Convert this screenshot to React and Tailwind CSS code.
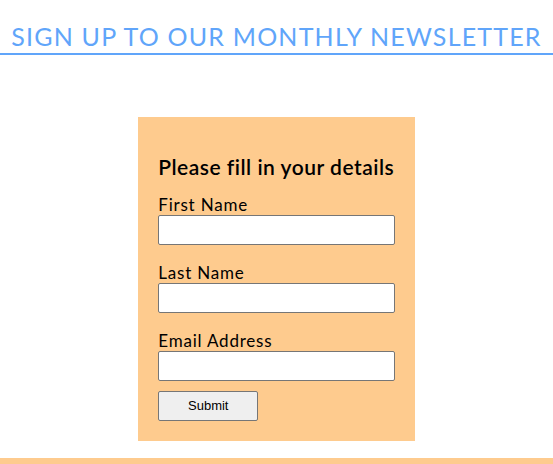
export default function App() {
  return (
    <div className="min-h-[464px] bg-white font-['Lato',sans-serif]">
      <h1 className="mx-0 mt-5 border-b-2 border-[#60a5fa] text-center text-[25px] leading-[33px] tracking-[1.2px] text-[#60a5fa]">
        SIGN UP TO OUR MONTHLY NEWSLETTER
      </h1>

      <form className="mx-auto mt-[62px] w-1/2 bg-[#fecb8e] px-5 pt-[37px] pb-5">
        <h3 className="mb-[15px] text-[21px] leading-[26px] font-semibold tracking-[0.5px] text-black">
          Please fill in your details
        </h3>

        <label htmlFor="fname" className="block text-[17px] leading-5 tracking-[0.8px] text-black">
          First Name
        </label>
        <input id="fname" type="text" className="block h-[30px] w-full rounded-[2px] border border-[#767676] bg-white" />

        <label htmlFor="lname" className="mt-[18px] block text-[17px] leading-5 tracking-[0.8px] text-black">
          Last Name
        </label>
        <input id="lname" type="text" className="block h-[30px] w-full rounded-[2px] border border-[#767676] bg-white" />

        <label htmlFor="email" className="mt-[18px] block text-[17px] leading-5 tracking-[0.8px] text-black">
          Email Address
        </label>
        <input id="email" type="email" className="block h-[30px] w-full rounded-[2px] border border-[#767676] bg-white" />

        <button
          type="submit"
          className="mt-[10px] h-[30px] w-[100px] rounded-[2px] border border-[#767676] bg-[#efefef] font-['Liberation_Sans',sans-serif] text-[13px] text-black"
        >
          Submit
        </button>
      </form>

      <footer className="mt-[17px] h-[7px] bg-[#fecb8e]" />
    </div>
  );
}
